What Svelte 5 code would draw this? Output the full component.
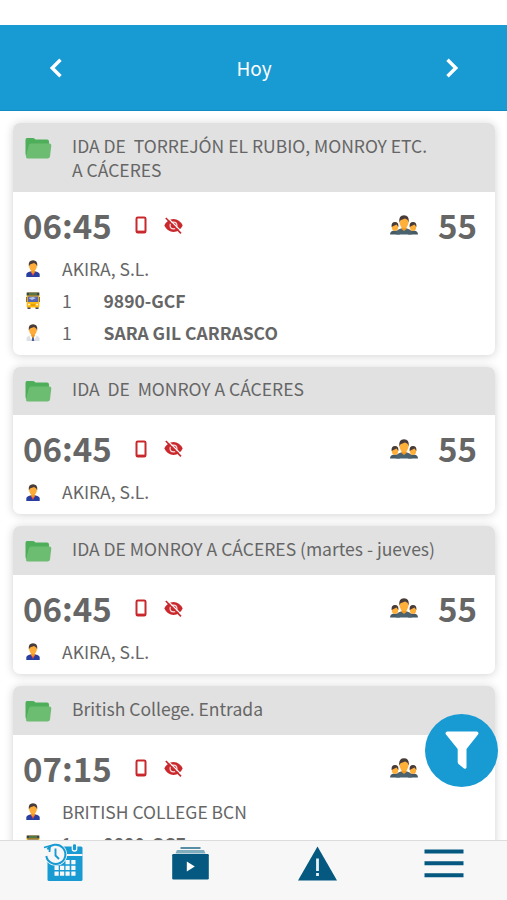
<script>
  let trips = [
    {
      title: "IDA DE  TORREJÓN EL RUBIO, MONROY ETC. A CÁCERES",
      time: "06:45",
      seats: 55,
      company: "AKIRA, S.L.",
      bus: "9890-GCF",
      driver: "SARA GIL CARRASCO",
    },
    { title: "IDA  DE  MONROY A CÁCERES", time: "06:45", seats: 55, company: "AKIRA, S.L." },
    {
      title: "IDA DE MONROY A CÁCERES (martes - jueves)",
      time: "06:45",
      seats: 55,
      company: "AKIRA, S.L.",
    },
    {
      title: "British College. Entrada",
      time: "07:15",
      seats: 5,
      company: "BRITISH COLLEGE BCN",
      bus: "9890-GCF",
    },
  ];
</script>

<style>
  :global(body) {
    margin: 0;
    background: #fff;
  }
  .app {
    display: flex;
    flex-direction: column;
    position: relative;
    height: 900px;
    overflow: hidden;
    box-sizing: border-box;
    padding-top: 25px;
    color: #666;
    font-family: "Noto Sans CJK JP", "Noto Sans", sans-serif;
  }
  svg {
    display: block;
    flex: none;
  }
  header {
    display: flex;
    flex: none;
    align-items: center;
    justify-content: space-between;
    box-sizing: border-box;
    height: 86px;
    padding: 0 48px 0 49px;
    background: #189ad3;
    border-bottom: 1px solid #118cc2;
    color: #fff;
  }
  header span {
    font-size: 19px;
  }
  main {
    display: flex;
    flex: 1;
    flex-direction: column;
    gap: 12.2px;
    min-height: 0;
    overflow: hidden;
    padding: 12px 12px 0 13px;
  }
  .card {
    flex: none;
    border-radius: 7px;
    background: #fff;
    box-shadow: 0 1px 10px rgba(0, 0, 0, 0.18);
  }
  .head {
    display: flex;
    box-sizing: border-box;
    min-height: 48.5px;
    padding: 10.5px 60px 9px 12px;
    border-radius: 7px 7px 0 0;
    background: #e1e1e1;
  }
  .head svg {
    margin: 4px 20px 0 0;
  }
  h2 {
    margin: 0;
    font-size: 17.5px;
    font-weight: 400;
    line-height: 24.5px;
    white-space: pre-wrap;
  }
  .body {
    padding: 0 19px 6px 10px;
  }
  .summary {
    display: flex;
    align-items: center;
    box-sizing: border-box;
    height: 61px;
    padding-top: 6px;
  }
  .time,
  .seats {
    font-size: 33px;
    font-weight: 700;
    line-height: 55px;
  }
  .time {
    width: 112px;
  }
  .eye {
    margin-left: 17px;
  }
  .people {
    margin-left: auto;
  }
  .seats {
    width: 38px;
    margin-left: 20px;
    text-align: right;
  }
  .row {
    display: flex;
    align-items: center;
    height: 32px;
    padding-left: 3px;
    font-size: 17.5px;
    line-height: 32px;
  }
  .row svg {
    margin-right: 22px;
  }
  .count {
    width: 41.5px;
  }
  .row b {
    font-weight: 700;
  }
  nav {
    display: flex;
    flex: none;
    box-sizing: border-box;
    height: 60px;
    border-top: 1px solid #dcdcdc;
    background: #f7f7f7;
  }
  nav div {
    display: flex;
    flex: 1;
    justify-content: center;
  }
  .filter {
    display: flex;
    position: absolute;
    top: 714px;
    left: 425px;
    align-items: center;
    justify-content: center;
    width: 73px;
    height: 73px;
    border-radius: 50%;
    background: #189ad3;
  }
</style>

{#snippet person(coat)}
  <svg width="14" height="17" viewBox="0 0 14 17">
    {#if coat}
      <path d="M0.5 17v-2.5q0-2 4-3h5q4 1 4 3V17z" fill="#dde2e6" />
      <path d="M4.5 11.3 7 14l2.5-2.7 1 1L8 17H6l-2.5-4.7z" fill="#fff" />
      <path d="M6.3 12.5h1.4l.6 4.5H5.7z" fill="#4d5d94" />
    {:else}
      <path d="M0.3 17v-2.5q0-2 4-3h5.4q4 1 4 3V17z" fill="#293fa0" />
      <path d="M4.5 11.3h5L7 16z" fill="#e84a4a" />
    {/if}
    <path d="M5.2 9h3.6v3L7 14l-1.8-2z" fill="#f39a1c" />
    <ellipse cx="7" cy="6" rx="3.9" ry="4.8" fill="#ffad38" />
    <path d="M2.8 6.5Q2 .3 7 .3t4.200 6.200l-1-2L8 3 4 4.500z" fill="#493c38" />
  </svg>
{/snippet}

<div class="app">
  <header>
    <svg width="13" height="20" viewBox="0 0 13 20">
      <path d="M11.500 1.800 3.200 10l8.300 8.200" fill="none" stroke="#fff" stroke-width="3.400" />
    </svg>
    <span>Hoy</span>
    <svg width="13" height="20" viewBox="0 0 13 20">
      <path d="M1.500 1.800 9.800 10l-8.300 8.200" fill="none" stroke="#fff" stroke-width="3.400" />
    </svg>
  </header>

  <main>
    {#each trips as trip}
      <section class="card">
        <div class="head">
          <svg width="27" height="21" viewBox="0 0 27 21">
            <path d="M2 0h6q1.500 0 2.500 1.500h11.500q2 0 2 2V18H2q-1.500 0-1.500-2V2Q.5 0 2 0z" fill="#4fae59" />
            <path d="M6 5.500h18.500q2 0 1.800 2L25 18.500q-.3 2-2.500 2H2.500Q.8 20.500 1 18.500L3.800 7.500q.5-2 2.200-2z" fill="#6cbd72" />
          </svg>
          <h2>{trip.title}</h2>
        </div>
        <div class="body">
          <div class="summary">
            <span class="time">{trip.time}</span>
            <svg width="12" height="18" viewBox="0 0 12 18">
              <rect x="1.500" y="1.500" width="9" height="15" rx="1.300" fill="none" stroke="#c9282d" stroke-width="2" />
              <path d="M2 15.600h8" stroke="#c9282d" stroke-width="2" />
            </svg>
            <svg class="eye" width="19" height="17" viewBox="0 0 19 17">
              <path d="M.3 8.500Q3.500 2 9.500 2t9.200 6.500q-3.200 6.500-9.200 6.500T.3 8.500z" fill="#c9282d" />
              <circle cx="9.500" cy="8.500" r="4" fill="#f8dede" />
              <circle cx="9.500" cy="8.500" r="2.800" fill="#c9282d" />
              <path d="M3.200.5 18 15" stroke="#fff" stroke-width="1.300" />
              <path d="M1.800 1 17 16.300" stroke="#c9282d" stroke-width="1.700" />
            </svg>
            <svg class="people" width="28" height="20" viewBox="0 0 28 20">
              <path d="M0 19.500q0-3.500 4-4h3q3 .5 3 4zM18 19.500q0-3.500 3-4h3q4 .5 4 4z" fill="#455a64" />
              <ellipse cx="5" cy="12" rx="3.200" ry="4" fill="#ffb03b" />
              <ellipse cx="23" cy="12" rx="3.200" ry="4" fill="#ffb03b" />
              <path d="M1.600 12q-.5-5 3.400-5t3.400 5L6.500 9.500zM19.600 12q-.5-5 3.400-5t3.400 5l-1.900-2.500z" fill="#493c38" />
              <path d="M6 19.500q0-5 5-6h6q5 1 5 6z" fill="#4b6370" />
              <path d="M11.500 11h5v3L14 16l-2.500-2z" fill="#f39a1c" />
              <ellipse cx="14" cy="7.300" rx="4.500" ry="5.800" fill="#ffb03b" />
              <path d="M9.200 7.500Q8.500.3 14 .3t4.800 7.200l-1.300-2.700-2.500-1.300-4.500 1.800z" fill="#493c38" />
            </svg>
            <span class="seats">{trip.seats}</span>
          </div>
          <div class="row">
            {@render person(false)}
            <span>{trip.company}</span>
          </div>
          {#if trip.bus}
            <div class="row">
              <svg width="14" height="17" viewBox="0 0 14 17">
                <path d="M1.500 14h3v3h-3zM9.500 14h3v3h-3z" fill="#4b4852" />
                <path d="M0 5h1v5H0zM13 5h1v5h-1z" fill="#555" />
                <rect x=".7" y=".5" width="12.600" height="15" rx="1.200" fill="#fdb913" />
                <rect x=".7" y=".5" width="12.600" height="3" fill="#37474f" />
                <path d="M3 2h8" stroke="#76a63f" />
                <path d="M1.800 4.500h10.400V10H1.800z" fill="#5866ad" />
                <path d="M2.500 6 7 5l3 1-4 2z" fill="#b6c5ee" />
                <path d="M2 12.500h2M10 12.500h2" stroke="#fff3c4" stroke-width="1.500" />
                <path d="M5 13h4" stroke="#c98200" />
              </svg>
              <span class="count">1</span>
              <b>{trip.bus}</b>
            </div>
          {/if}
          {#if trip.driver}
            <div class="row">
              {@render person(true)}
              <span class="count">1</span>
              <b>{trip.driver}</b>
            </div>
          {/if}
        </div>
      </section>
    {/each}
  </main>

  <nav>
    <div>
      <svg width="40" height="42" viewBox="0 0 40 42">
        <path d="M5 5.500h33q1.500 0 1.500 1.500v31.500q0 1.500-1.500 1.500H6q-1.500 0-1.500-1.500V7z" fill="#189ad3" />
        <path d="M22 14h17.500" stroke="#f7f7f7" stroke-width="2" />
        <rect x="29.300" y="2.500" width="4.400" height="7.500" rx="2" fill="#189ad3" stroke="#f7f7f7" stroke-width="1.300" />
        <circle cx="12.800" cy="13.500" r="11.300" fill="#f7f7f7" />
        <path d="M4.500 8.500A9.600 9.600 0 1 1 3.300 15" fill="none" stroke="#189ad3" stroke-width="2" />
        <path d="m1 6.500 6-1.500-.5 6" fill="none" stroke="#189ad3" stroke-width="1.800" />
        <path d="M12.500 7.500v7l3.500 3.500" fill="none" stroke="#189ad3" stroke-width="1.900" />
        <path
          d="M22.500 19h4.200v4.200h-4.200zM28.300 19h4.200v4.200h-4.200zM11.500 24.800h4.200V29h-4.200zM17 24.800h4.200V29H17zM22.500 24.800h4.200V29h-4.200zM28.300 24.800h4.200V29h-4.200zM11.500 30.500h4.200v4.200h-4.200zM17 30.500h4.200v4.200H17zM22.500 30.500h4.200v4.200h-4.200zM28.300 30.500h4.200v4.200h-4.200z"
          fill="#f7f7f7"
        />
      </svg>
    </div>
    <div>
      <svg width="38" height="40" viewBox="0 0 38 40">
        <path d="M9.500 7h20" stroke="#2f7391" stroke-width="1.600" />
        <path d="M6 9h27l1.500 3.500h-30z" fill="#7fadbd" />
        <rect x="1.200" y="13" width="36.600" height="25.500" rx="1.200" fill="#05587f" />
        <path d="m15.800 20.500 8 5-8 5z" fill="#fff" />
      </svg>
    </div>
    <div>
      <svg width="40" height="41" viewBox="0 0 40 41">
        <path d="M20.500 5.500 40 39.500H1z" fill="#05587f" />
        <path d="M20.500 17.500V30M20.500 32v3" stroke="#e6f2f5" stroke-width="2.800" />
      </svg>
    </div>
    <div>
      <svg width="40" height="40" viewBox="0 0 40 40">
        <path d="M.5 10.500h39M.5 22.300h39M.5 34.200h39" stroke="#05587f" stroke-width="4" />
      </svg>
    </div>
  </nav>

  <div class="filter">
    <svg width="34" height="39" viewBox="0 0 34 39">
      <path
        d="M2 .5h30q2.300 1 1 3L21.500 18v18.500q-.5 2-2.500 1l-5.500-4.500q-.8-.8-.8-2V18L1 3.500Q-.3 1.500 2 .5z"
        fill="#fff"
      />
    </svg>
  </div>
</div>
